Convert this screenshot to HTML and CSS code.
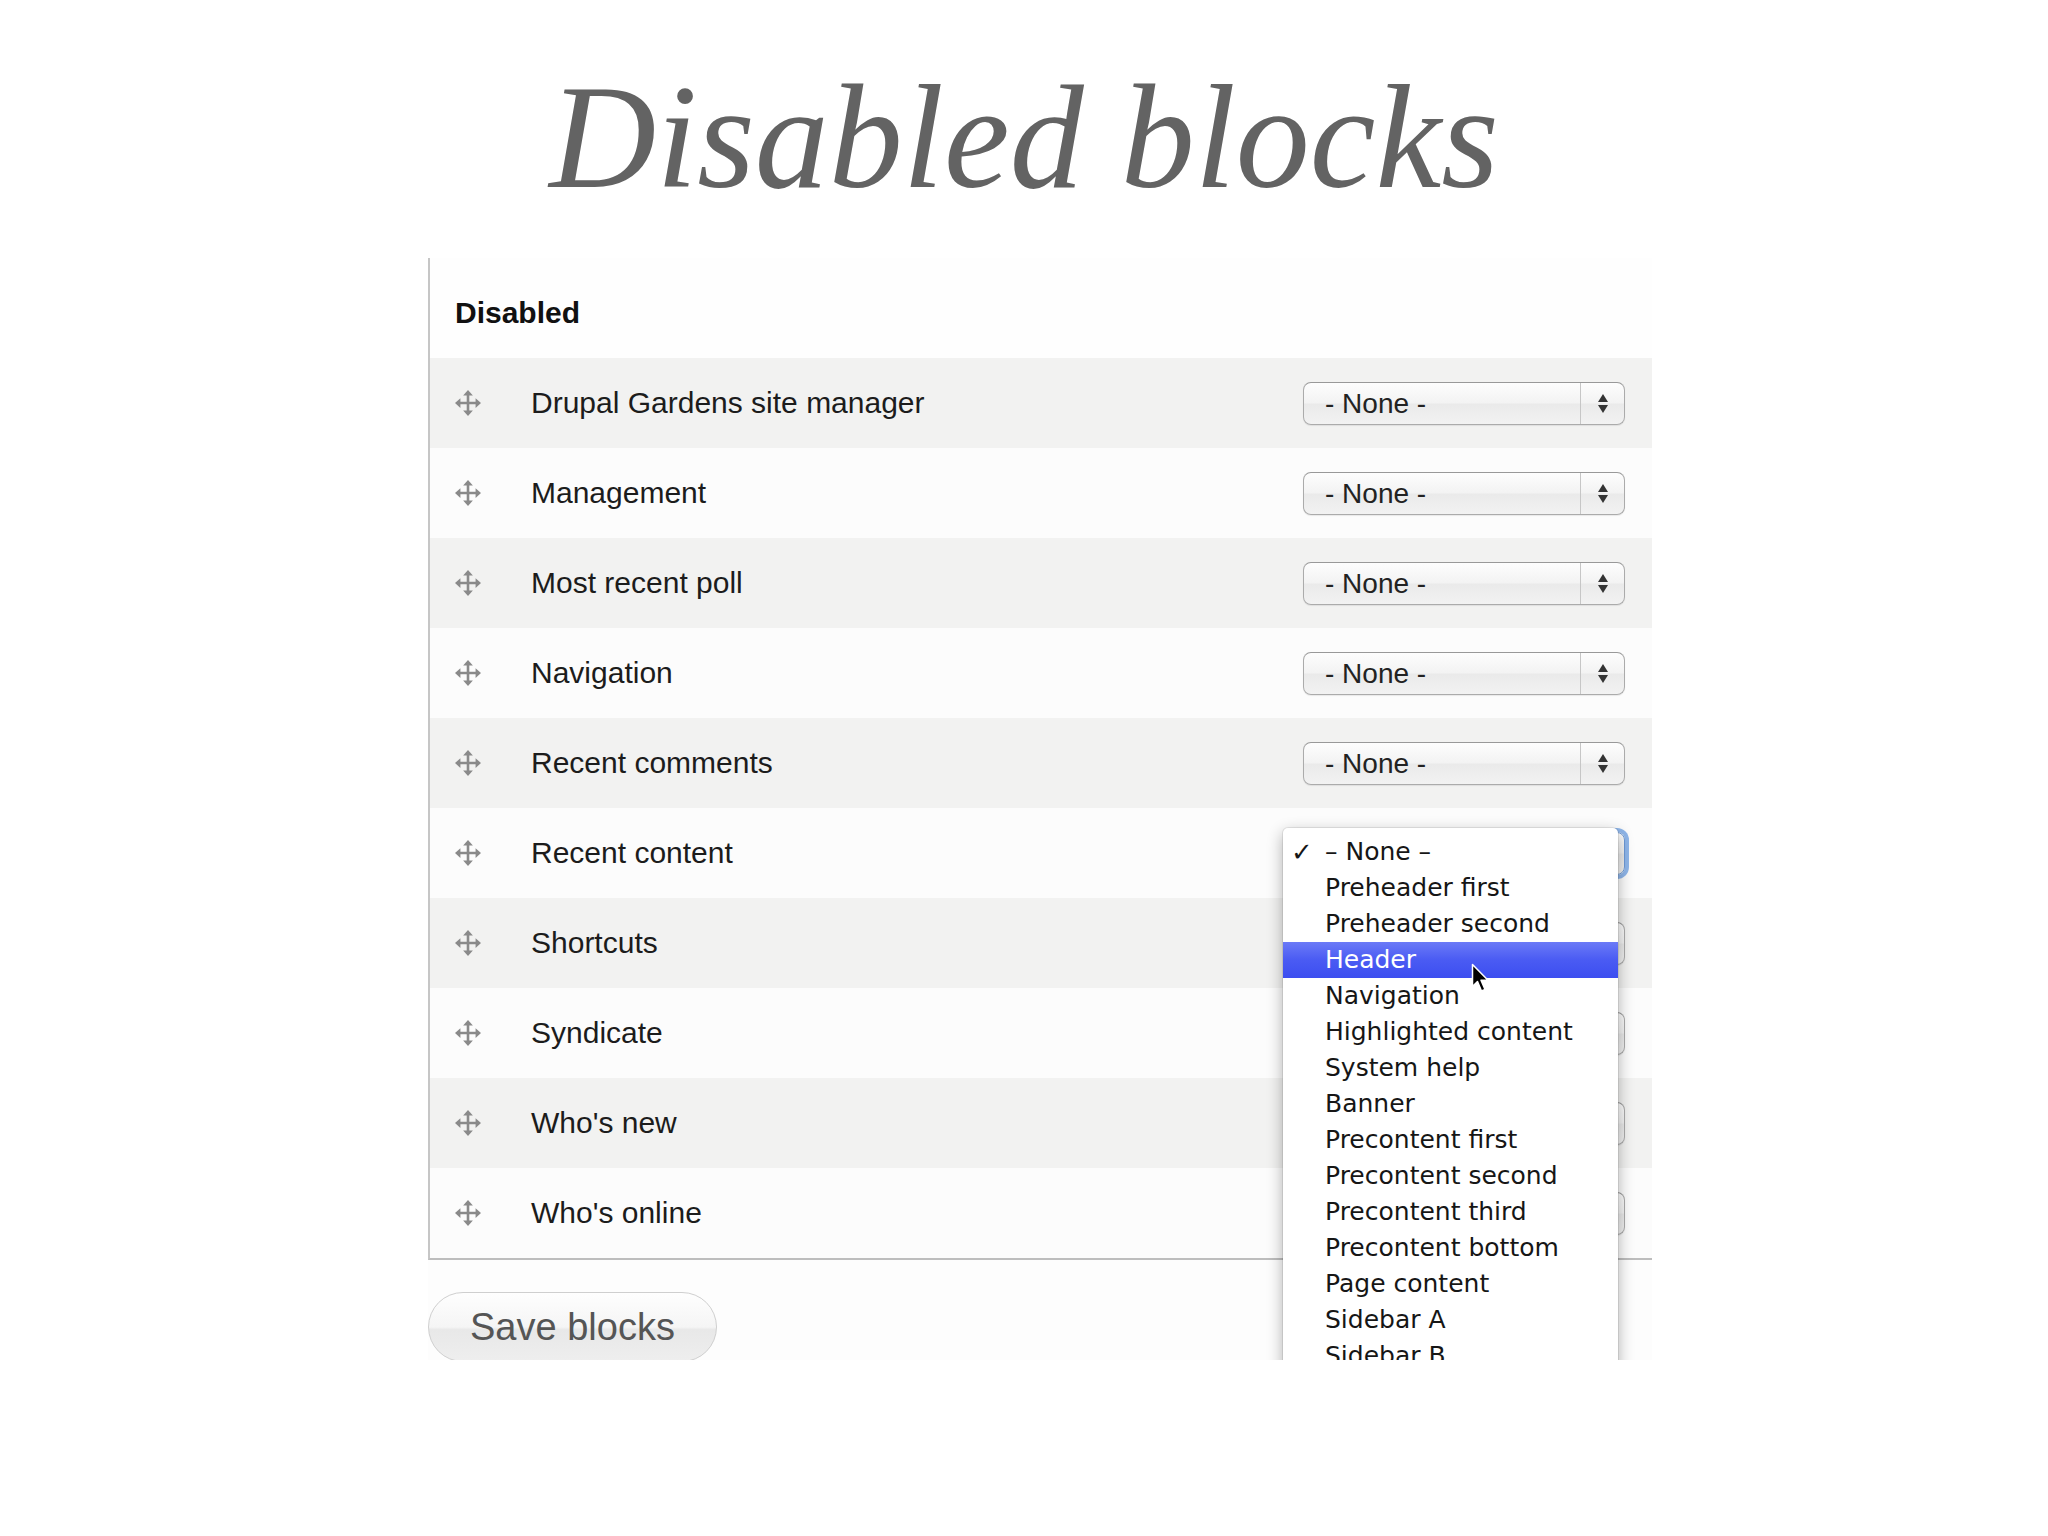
FILE: index.html
```html
<!DOCTYPE html>
<html>
<head>
<meta charset="utf-8">
<link rel="stylesheet" href="styles.css">
</head>
<body>
<div class="slide">
  <h1 class="title">Disabled blocks</h1>
  <div class="shot">
    <div class="panel">
      <div class="panel-head">Disabled</div>

      <div class="row shade">
        <span class="drag"><svg viewBox="0 0 24 24"><path d="M12 4v16M4 12h16" /><path class="h" d="M12 0l-4.5 5h9zM12 24l-4.5-5h9zM0 12l5-4.5v9zM24 12l-5-4.5v9z"/></svg></span>
        <span class="label">Drupal Gardens site manager</span>
        <div class="sel"><span class="sel-text">- None -</span><span class="sel-arrows"><i class="up"></i><i class="down"></i></span></div>
      </div>
      <div class="row">
        <span class="drag"><svg viewBox="0 0 24 24"><path d="M12 4v16M4 12h16" /><path class="h" d="M12 0l-4.5 5h9zM12 24l-4.5-5h9zM0 12l5-4.5v9zM24 12l-5-4.5v9z"/></svg></span>
        <span class="label">Management</span>
        <div class="sel"><span class="sel-text">- None -</span><span class="sel-arrows"><i class="up"></i><i class="down"></i></span></div>
      </div>
      <div class="row shade">
        <span class="drag"><svg viewBox="0 0 24 24"><path d="M12 4v16M4 12h16" /><path class="h" d="M12 0l-4.5 5h9zM12 24l-4.5-5h9zM0 12l5-4.5v9zM24 12l-5-4.5v9z"/></svg></span>
        <span class="label">Most recent poll</span>
        <div class="sel"><span class="sel-text">- None -</span><span class="sel-arrows"><i class="up"></i><i class="down"></i></span></div>
      </div>
      <div class="row">
        <span class="drag"><svg viewBox="0 0 24 24"><path d="M12 4v16M4 12h16" /><path class="h" d="M12 0l-4.5 5h9zM12 24l-4.5-5h9zM0 12l5-4.5v9zM24 12l-5-4.5v9z"/></svg></span>
        <span class="label">Navigation</span>
        <div class="sel"><span class="sel-text">- None -</span><span class="sel-arrows"><i class="up"></i><i class="down"></i></span></div>
      </div>
      <div class="row shade">
        <span class="drag"><svg viewBox="0 0 24 24"><path d="M12 4v16M4 12h16" /><path class="h" d="M12 0l-4.5 5h9zM12 24l-4.5-5h9zM0 12l5-4.5v9zM24 12l-5-4.5v9z"/></svg></span>
        <span class="label">Recent comments</span>
        <div class="sel"><span class="sel-text">- None -</span><span class="sel-arrows"><i class="up"></i><i class="down"></i></span></div>
      </div>
      <div class="row">
        <span class="drag"><svg viewBox="0 0 24 24"><path d="M12 4v16M4 12h16" /><path class="h" d="M12 0l-4.5 5h9zM12 24l-4.5-5h9zM0 12l5-4.5v9zM24 12l-5-4.5v9z"/></svg></span>
        <span class="label">Recent content</span>
        <div class="sel focus covered"><span class="sel-text">- None -</span><span class="sel-arrows"><i class="up"></i><i class="down"></i></span></div>
      </div>
      <div class="row shade">
        <span class="drag"><svg viewBox="0 0 24 24"><path d="M12 4v16M4 12h16" /><path class="h" d="M12 0l-4.5 5h9zM12 24l-4.5-5h9zM0 12l5-4.5v9zM24 12l-5-4.5v9z"/></svg></span>
        <span class="label">Shortcuts</span>
        <div class="sel covered"><span class="sel-text">- None -</span><span class="sel-arrows"><i class="up"></i><i class="down"></i></span></div>
      </div>
      <div class="row">
        <span class="drag"><svg viewBox="0 0 24 24"><path d="M12 4v16M4 12h16" /><path class="h" d="M12 0l-4.5 5h9zM12 24l-4.5-5h9zM0 12l5-4.5v9zM24 12l-5-4.5v9z"/></svg></span>
        <span class="label">Syndicate</span>
        <div class="sel covered"><span class="sel-text">- None -</span><span class="sel-arrows"><i class="up"></i><i class="down"></i></span></div>
      </div>
      <div class="row shade">
        <span class="drag"><svg viewBox="0 0 24 24"><path d="M12 4v16M4 12h16" /><path class="h" d="M12 0l-4.5 5h9zM12 24l-4.5-5h9zM0 12l5-4.5v9zM24 12l-5-4.5v9z"/></svg></span>
        <span class="label">Who's new</span>
        <div class="sel covered"><span class="sel-text">- None -</span><span class="sel-arrows"><i class="up"></i><i class="down"></i></span></div>
      </div>
      <div class="row">
        <span class="drag"><svg viewBox="0 0 24 24"><path d="M12 4v16M4 12h16" /><path class="h" d="M12 0l-4.5 5h9zM12 24l-4.5-5h9zM0 12l5-4.5v9zM24 12l-5-4.5v9z"/></svg></span>
        <span class="label">Who's online</span>
        <div class="sel covered"><span class="sel-text">- None -</span><span class="sel-arrows"><i class="up"></i><i class="down"></i></span></div>
      </div>
    </div>

    <div class="actions"><button class="save">Save blocks</button></div>

    <ul class="menu">
      <li class="checked"><span class="check">✓</span>– None –</li>
      <li>Preheader first</li>
      <li>Preheader second</li>
      <li class="hover">Header</li>
      <li>Navigation</li>
      <li>Highlighted content</li>
      <li>System help</li>
      <li>Banner</li>
      <li>Precontent first</li>
      <li>Precontent second</li>
      <li>Precontent third</li>
      <li>Precontent bottom</li>
      <li>Page content</li>
      <li>Sidebar A</li>
      <li>Sidebar B</li>
    </ul>

    <svg class="cursor" viewBox="0 0 18 30"><path d="M1.5 1.5v22l5-5 4 9.5 3.5-1.5-4-9.2h7z" /></svg>
  </div>
</div>
</body>
</html>
```

FILE: styles.css
```css
html, body {
  margin: 0;
  padding: 0;
  background: #ffffff;
}

.slide {
  width: 2048px;
  height: 1536px;
  position: relative;
  overflow: hidden;
  font-family: "Liberation Sans", Arial, sans-serif;
}

.title {
  margin: 0;
  padding-top: 63px;
  font-family: "Liberation Serif", "Times New Roman", serif;
  font-style: italic;
  font-weight: normal;
  font-size: 148px;
  line-height: 148px;
  color: #636363;
  text-align: center;
}

.shot {
  position: relative;
  margin-top: 47px;
  margin-left: 428px;
  width: 1224px;
  height: 1102px;
  overflow: hidden;
  background: #fdfdfd;
}

.panel {
  border-left: 2px solid #c6c6c6;
  border-bottom: 2px solid #bdbdbd;
}

.panel-head {
  box-sizing: border-box;
  height: 100px;
  padding: 40px 0 0 25px;
  font-size: 30px;
  line-height: 30px;
  font-weight: bold;
  color: #111111;
  background: #fefefe;
}

.row {
  display: flex;
  align-items: center;
  height: 90px;
  padding: 0 27px 0 26px;
  background: #fcfcfc;
}

.row.shade {
  background: #f2f2f1;
}

.drag {
  width: 26px;
  height: 26px;
  margin-right: 50px;
  margin-left: -1px;
  flex: none;
}

.drag svg {
  display: block;
  width: 26px;
  height: 26px;
}

.drag svg path {
  stroke: #8a8a8a;
  stroke-width: 2.4;
  fill: none;
}

.drag svg path.h {
  stroke: none;
  fill: #8a8a8a;
}

.label {
  flex: 1;
  font-size: 30px;
  color: #1c1c1c;
  white-space: nowrap;
}

.sel {
  box-sizing: border-box;
  width: 322px;
  height: 43px;
  display: flex;
  align-items: stretch;
  border: 1px solid #ababab;
  border-top-color: #999999;
  border-radius: 8px;
  background: linear-gradient(to bottom, #fdfdfd 0%, #f3f3f3 48%, #eaeaea 52%, #f2f2f2 100%);
  box-shadow: 0 1px 1px rgba(0, 0, 0, 0.08);
}

.sel.focus {
  border-color: #6e9bd8;
  box-shadow: 0 0 0 4px #8fb6ea;
}

.sel-text {
  flex: 1;
  padding-left: 21px;
  font-size: 28px;
  line-height: 41px;
  color: #222222;
}

.sel.covered .sel-text {
  visibility: hidden;
}

.sel-arrows {
  width: 43px;
  border-left: 1px solid #c6c6c6;
  display: flex;
  flex-direction: column;
  align-items: center;
  justify-content: center;
  gap: 3px;
}

.sel-arrows i {
  display: block;
  width: 0;
  height: 0;
  border-left: 5px solid transparent;
  border-right: 5px solid transparent;
}

.sel-arrows .up {
  border-bottom: 8px solid #333333;
}

.sel-arrows .down {
  border-top: 8px solid #333333;
}

.actions {
  padding-top: 32px;
}

.save {
  box-sizing: border-box;
  width: 289px;
  height: 70px;
  padding: 0 0 0 41px;
  text-align: left;
  border: 1px solid #cfcfcf;
  border-radius: 35px;
  background: linear-gradient(to bottom, #fefefe 0%, #f5f5f5 50%, #e8e8e8 54%, #eeeeee 100%);
  font-family: "Liberation Sans", Arial, sans-serif;
  font-size: 38px;
  line-height: 68px;
  color: #555555;
}

.menu {
  position: absolute;
  left: 855px;
  top: 570px;
  width: 335px;
  margin: 0;
  padding: 6px 0 0 0;
  list-style: none;
  background: #ffffff;
  border-radius: 5px 5px 0 0;
  box-shadow: 0 5px 16px rgba(0, 0, 0, 0.32), 0 0 0 1px rgba(0, 0, 0, 0.08);
  font-family: "DejaVu Sans", sans-serif;
  font-size: 25px;
  color: #161616;
}

.menu li {
  position: relative;
  height: 36px;
  line-height: 36px;
  padding-left: 42px;
  white-space: nowrap;
}

.menu li.hover {
  color: #ffffff;
  background: linear-gradient(to bottom, #6b7af7 0%, #4a5bf3 50%, #3c4ef0 100%);
}

.menu .check {
  position: absolute;
  left: 8px;
  top: 0;
  font-size: 26px;
  font-weight: bold;
}

.cursor {
  position: absolute;
  left: 1043px;
  top: 705px;
  width: 18px;
  height: 30px;
}

.cursor path {
  fill: #000000;
  stroke: #ffffff;
  stroke-width: 1.5;
  stroke-linejoin: round;
}
```
